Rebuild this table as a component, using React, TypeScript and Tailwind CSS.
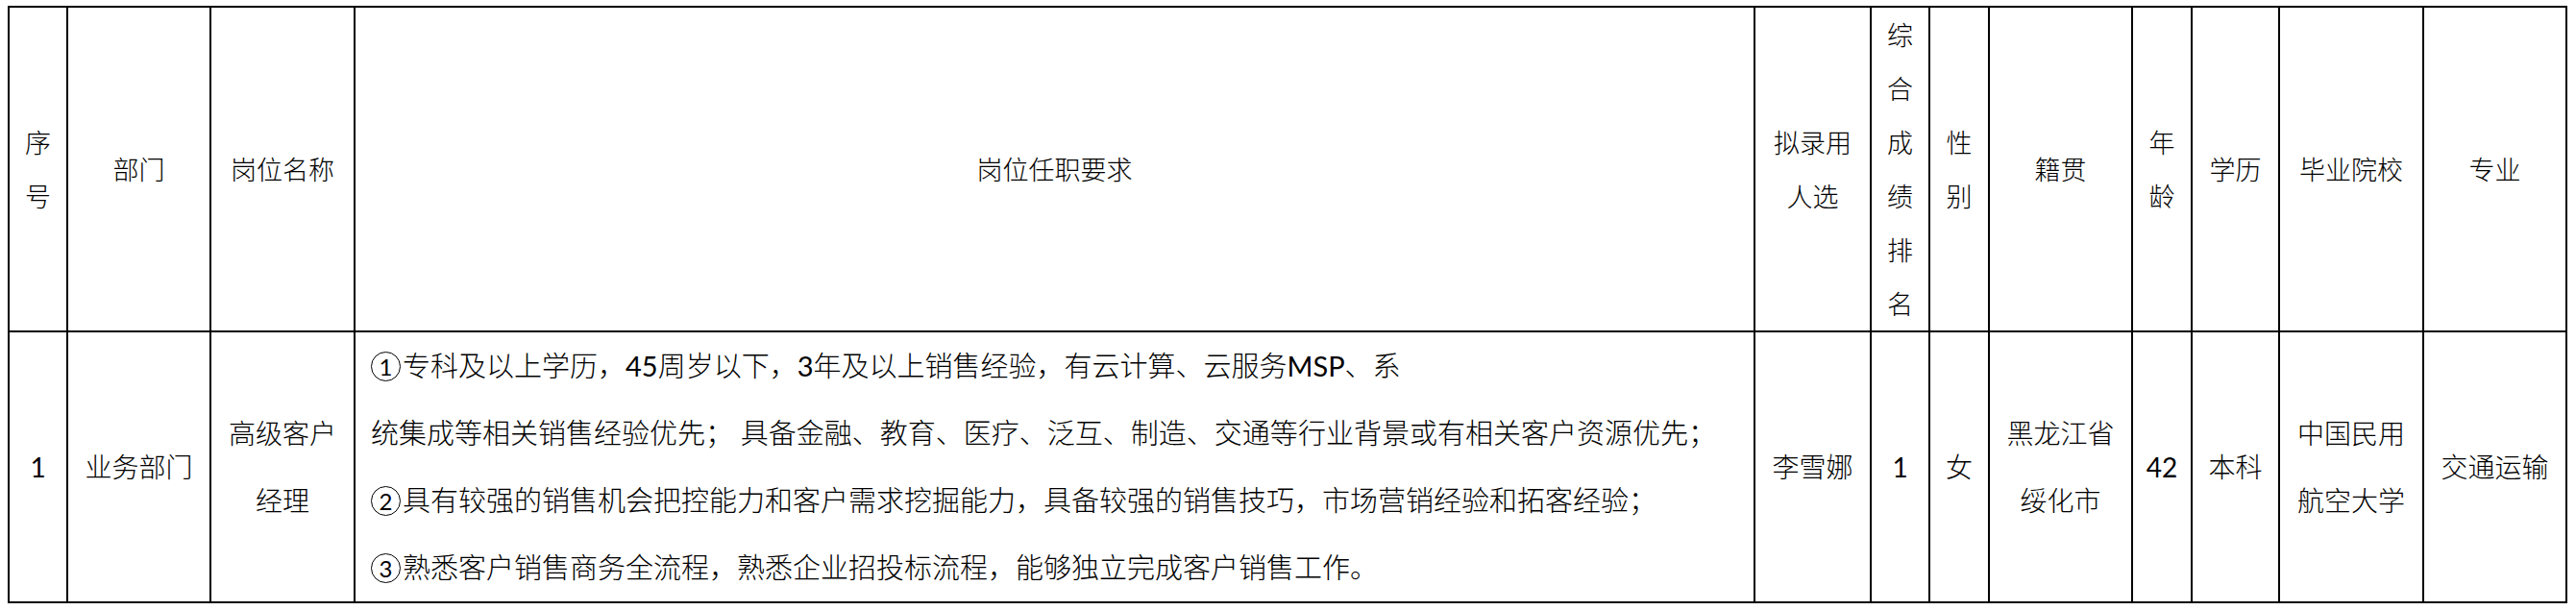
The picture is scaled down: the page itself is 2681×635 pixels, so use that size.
import React from 'react';

const widths = [61, 149, 150, 1457, 121, 61, 62, 149, 62, 91, 150, 149];

const headers: React.ReactNode[] = [
  <>序<br />号</>,
  '部门',
  '岗位名称',
  '岗位任职要求',
  <>拟录用<br />人选</>,
  <>综<br />合<br />成<br />绩<br />排<br />名</>,
  <>性<br />别</>,
  '籍贯',
  <>年<br />龄</>,
  '学历',
  '毕业院校',
  '专业',
];

// circled numbers (①②③) are drawn bigger in the original sheet
const Circ = ({ n }: { n: string }) => (
  <span className="mr-[2px] inline-flex h-[31px] w-[31px] -translate-y-[3px] items-center justify-center rounded-full border-[1.5px] border-black align-middle font-['Lato',sans-serif] text-[24px] font-normal leading-none">
    {n}
  </span>
);
const Num = ({ children }: { children: React.ReactNode }) => (
  <span className="font-normal">{children}</span>
);

const bodyFont = "font-['Lato','Noto_Sans_CJK_SC',sans-serif]";
const cell = 'border-2 border-black p-0 text-center align-middle';

export default function App() {
  return (
    <div className="min-h-screen bg-white pl-[8px] pt-[6px] text-black">
      <table className="table-fixed border-collapse w-[2664px]">
        <colgroup>
          {widths.map((w, i) => (
            <col key={i} style={{ width: w }} />
          ))}
        </colgroup>
        <thead>
          <tr>
            {headers.map((h, i) => (
              <th
                key={i}
                className="h-[338px] border-2 border-black p-0 text-center align-middle font-['Noto_Sans_CJK_SC',sans-serif] text-[27px] font-light leading-[56px]"
              >
                {h}
              </th>
            ))}
          </tr>
        </thead>
        <tbody>
          <tr className={`${bodyFont} text-[28px] font-light leading-[70px]`}>
            <td className={`${cell} h-[282px]`}><Num>1</Num></td>
            <td className={cell}>业务部门</td>
            <td className={cell}>
              高级客户<br />经理
            </td>
            <td className="border-2 border-black p-0 pl-[16px] align-top text-left text-[29px] leading-[70px]">
              <div className="whitespace-nowrap">
                <Circ n="1" />专科及以上学历，<Num>45</Num>周岁以下，<Num>3</Num>年及以上销售经验，有云计算、云服务<Num>MSP</Num>、系
              </div>
              <div className="whitespace-nowrap">
                统集成等相关销售经验优先； 具备金融、教育、医疗、泛互、制造、交通等行业背景或有相关客户资源优先；
              </div>
              <div className="whitespace-nowrap">
                <Circ n="2" />具有较强的销售机会把控能力和客户需求挖掘能力，具备较强的销售技巧，市场营销经验和拓客经验；
              </div>
              <div className="whitespace-nowrap">
                <Circ n="3" />熟悉客户销售商务全流程，熟悉企业招投标流程，能够独立完成客户销售工作。
              </div>
            </td>
            <td className={cell}>李雪娜</td>
            <td className={cell}><Num>1</Num></td>
            <td className={cell}>女</td>
            <td className={cell}>
              黑龙江省<br />绥化市
            </td>
            <td className={cell}><Num>42</Num></td>
            <td className={cell}>本科</td>
            <td className={cell}>
              中国民用<br />航空大学
            </td>
            <td className={cell}>交通运输</td>
          </tr>
        </tbody>
      </table>
    </div>
  );
}
